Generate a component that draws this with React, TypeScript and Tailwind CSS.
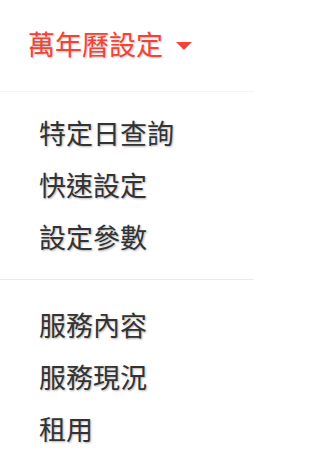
const groups: string[][] = [
  ["特定日查詢", "快速設定", "設定參數"],
  ["服務內容", "服務現況", "租用"],
];

export default function App() {
  return (
    <div
      className="w-[254px] h-[461px] bg-white overflow-hidden"
      style={{ fontFamily: '"Noto Sans CJK TC", "Noto Sans", sans-serif' }}
    >
      <div className="h-[91px] pb-[5px] pl-[28px] flex items-center">
        <span className="text-[27px] leading-none text-[#f44336] [text-shadow:1px_1px_2px_rgba(0,0,0,0.25)]">
          萬年曆設定
        </span>
        <svg width="16" height="8" viewBox="0 0 16 8" className="ml-[13px] mt-[5px]">
          <path d="M0 0 H16 L8 8 Z" fill="#f44336" />
        </svg>
      </div>
      <div className="h-px bg-[#f5f5f5]" />
      <div className="pt-[14px] pb-[17px]">
        {groups[0].map((t) => (
          <Item key={t} label={t} />
        ))}
      </div>
      <div className="h-px bg-[#eaeaea]" />
      <div className="pt-[18px]">
        {groups[1].map((t) => (
          <Item key={t} label={t} />
        ))}
      </div>
    </div>
  );
}

function Item({ label }: { label: string }) {
  return (
    <div className="h-[52px] pl-[39px] flex items-center">
      <span className="text-[27px] leading-none text-[#333] [text-shadow:1px_1px_2px_rgba(0,0,0,0.3)]">
        {label}
      </span>
    </div>
  );
}
